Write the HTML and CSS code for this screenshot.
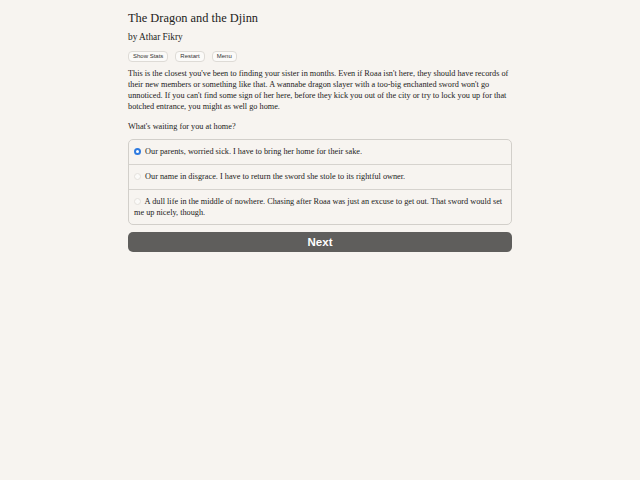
FILE: index.html
```html
<!DOCTYPE html>
<html>
<head>
<meta charset="utf-8">
<title>The Dragon and the Djinn</title>
<link rel="stylesheet" href="styles.css">
</head>
<body>
<div id="container">
  <h1 class="gameTitle">The Dragon and the Djinn</h1>
  <h2 class="gameAuthor">by Athar Fikry</h2>
  <p class="buttons">
    <button class="spacedLink">Show Stats</button>
    <button class="spacedLink">Restart</button>
    <button class="spacedLink">Menu</button>
  </p>
  <div id="text">
    <p>This is the closest you've been to finding your sister in months. Even if Roaa isn't here, they should have records of their new members or something like that. A wannabe dragon slayer with a too-big enchanted sword won't go unnoticed. If you can't find some sign of her here, before they kick you out of the city or try to lock you up for that botched entrance, you might as well go home.</p>
    <p class="question">What's waiting for you at home?</p>
    <form class="choice">
      <label class="choiceRow"><input type="radio" name="choice" checked> Our parents, worried sick. I have to bring her home for their sake.</label>
      <label class="choiceRow"><input type="radio" name="choice"> Our name in disgrace. I have to return the sword she stole to its rightful owner.</label>
      <label class="choiceRow"><input type="radio" name="choice"> A dull life in the middle of nowhere. Chasing after Roaa was just an excuse to get out. That sword would set me up nicely, though.</label>
    </form>
    <button class="next">Next</button>
  </div>
</div>
</body>
</html>
```
FILE: styles.css
```css
body{
	margin: 0;
	background-color: #f7f4f0;
	color: #232221;
	font-family: "Liberation Serif", serif;
}
#container{
	width: 384px;
	margin: 0 auto;
	padding-top: 10px;
}
.gameTitle{
	font-size: 12.4px;
	font-weight: normal;
	margin: 0 0 5px 0;
	line-height: 16px;
}
.gameAuthor{
	font-size: 9.3px;
	font-weight: normal;
	margin: 0 0 7px 0;
	line-height: 13px;
}
.buttons{
	margin: 0 0 6px 0;
	display: flex;
	gap: 7px;
}
.spacedLink{
	font-family: "Liberation Sans", sans-serif;
	font-size: 6px;
	color: #333;
	background: #fbfaf8;
	border: 1px solid #dedbd6;
	border-radius: 4px;
	padding: 0 4px;
	height: 11px;
	line-height: 9px;
}
#text p{
	font-size: 8.25px;
	line-height: 11px;
	margin: 0 0 9px 0;
}
#text p.question{
	margin-bottom: 7px;
}
.choice{
	border: 1px solid #d2cfca;
	border-radius: 5px;
	margin-bottom: 7px;
}
.choiceRow{
	display: block;
	font-size: 8.25px;
	line-height: 11px;
	padding: 6px 2px 7px 5px;
	border-top: 1px solid #d6d3ce;
}
.choiceRow:first-child{
	border-top: none;
}
.choiceRow:last-child{
	padding-bottom: 6px;
}
.choiceRow input{
	appearance: none;
	-webkit-appearance: none;
	width: 7px;
	height: 7px;
	margin: 0 2px 0 0;
	vertical-align: -1px;
	border: 1px solid #e4e1dc;
	border-radius: 50%;
	background: #fbfaf8;
}
.choiceRow input:checked{
	border: 2.5px solid #2f7be0;
	background: #fff;
}
.next{
	display: block;
	width: 100%;
	height: 20px;
	border: none;
	border-radius: 5px;
	background: #5f5e5c;
	color: #fff;
	font-family: "Liberation Sans", sans-serif;
	font-weight: bold;
	font-size: 11.5px;
}
```
